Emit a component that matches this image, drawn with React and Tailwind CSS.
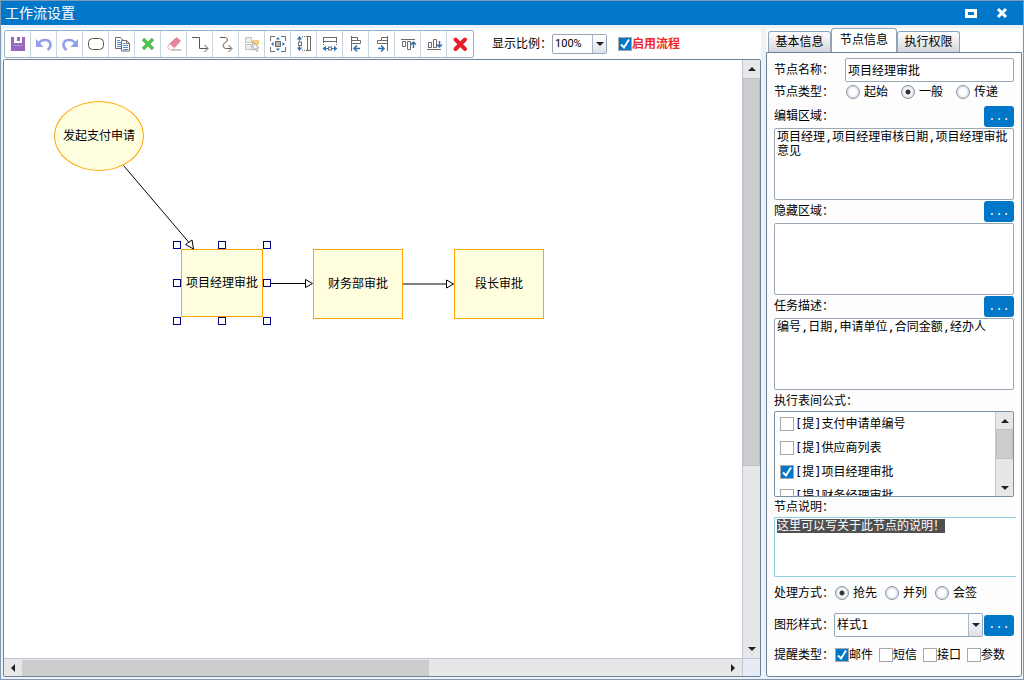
// src/pages/WorkflowSettings.jsx
import React from 'react';
import { useEffect, useRef, useState } from 'react';
import clsx from 'clsx';

const GREY = "#6b6b6b";
const BLUE = "#2f6fb5";

const Icon = ({ children }) => (
    <svg viewBox="0 0 20 20" className="w-5 h-5" fill="none">{children}</svg>
);

const tools = [
    {
        title: "保存",
        icon: (
            <Icon>
                <path d="M3 3h3v6h8V3h3v14H3z" fill="#9768bd" />
                <path d="M9 3h3v4H9z" fill="#9768bd" />
                <path d="M5 11h10v1H5z" fill="#b08bd0" />
            </Icon>
        ),
    },
    {
        title: "撤销",
        icon: (
            <Icon>
                <path d="M4.500 10C7 4.500 16.500 4.500 16.500 11c0 2-1 3.500-3 5" stroke="#93a0ea" strokeWidth="2.600" />
                <path d="M2 5v8h7.500z" fill="#93a0ea" />
            </Icon>
        ),
    },
    {
        title: "重做",
        icon: (
            <Icon>
                <path d="M15.500 10C13 4.500 3.500 4.500 3.500 11c0 2 1 3.500 3 5" stroke="#93a0ea" strokeWidth="2.600" />
                <path d="M18 5v8h-7.500z" fill="#93a0ea" />
            </Icon>
        ),
    },
    {
        title: "节点",
        icon: (
            <Icon>
                <rect x="2.500" y="4.500" width="15" height="11" rx="4" stroke="#555" />
            </Icon>
        ),
    },
    {
        title: "复制",
        icon: (
            <Icon>
                <path d="M3.500 3.500h5l2.500 2.500v8.500H3.500z" fill="#fff" stroke={GREY} />
                <path d="M5 6.500h3M5 8.500h4M5 10.500h4M5 12.500h4" stroke={BLUE} strokeWidth="0.800" />
                <path d="M9.500 6.500h5l3 3v7.500h-8z" fill="#fff" stroke={GREY} />
                <path d="M14.500 6.500v3h3" stroke={GREY} />
                <path d="M11 9.500h2.500M11 11.500h5M11 13.500h5M11 15.500h5" stroke={BLUE} strokeWidth="0.800" />
            </Icon>
        ),
    },
    {
        title: "删除",
        icon: (
            <Icon>
                <path d="M5 5l10 10M15 5L5 15" stroke="#4fbf4f" strokeWidth="3.400" />
            </Icon>
        ),
    },
    {
        title: "擦除",
        icon: (
            <Icon>
                <path d="M12.500 3l4.500 4-6.500 7-5-4.500z" fill="#e5849a" />
                <path d="M5.500 9.500l5 4.500-1.800 1.800H6l-2.300-2.300z" fill="#fff" stroke="#e5a0ae" />
                <path d="M8 16h9.500" stroke="#999" />
            </Icon>
        ),
    },
    {
        title: "折线",
        icon: (
            <Icon>
                <path d="M2 3.500h7.500v11h8M14.500 11l3.500 3.500-3.500 3.500" stroke="#555" />
            </Icon>
        ),
    },
    {
        title: "曲线",
        icon: (
            <Icon>
                <path d="M4 3.500h4c2.500 0 3.500 1 3.500 2.500 0 2-4.500 3-4.500 5.500 0 2 1.500 3 3.500 3H15M12.500 11l3.500 3.500-3.500 3.500" stroke="#555" />
            </Icon>
        ),
    },
    {
        title: "选择",
        icon: (
            <Icon>
                <path d="M3.500 3.500h6v5h-6zM3.500 10.500h6v5h-6z" fill="#eee" stroke="#c2c2c2" />
                <path d="M10 6h7v5h-7z" fill="#f3cd80" />
                <path d="M11 8v8.500l2-2 1.500 3 1.500-.8-1.500-2.700H17z" fill="#f7f7f7" stroke="#aaa" />
            </Icon>
        ),
    },
    {
        title: "居中",
        icon: (
            <Icon>
                <path d="M7 2.500H2.500V7M13 2.500h4.500V7M7 17.500H2.500V13M13 17.500h4.500V13" stroke={GREY} />
                <rect x="7.500" y="7.500" width="5" height="5" fill="#b5b5b5" stroke={GREY} />
                <path d="M10 3l2 2.500H8zM10 17l2-2.500H8zM3 10l2.500-2v4zM17 10l-2.500-2v4z" fill={BLUE} />
            </Icon>
        ),
    },
    {
        title: "等高",
        icon: (
            <Icon>
                <path d="M5.500 2l2.700 3.500H2.800zM5.500 17l2.700-3.500H2.800z" fill={BLUE} />
                <path d="M5.500 4v3M5.500 12v3" stroke={BLUE} />
                <rect x="4.500" y="8" width="3" height="3.500" stroke={GREY} />
                <path d="M8 2.500h5M8 16.500h5" stroke={GREY} strokeDasharray="1 1" />
                <rect x="13.500" y="2.500" width="3" height="14" stroke={GREY} />
            </Icon>
        ),
    },
    {
        title: "等宽",
        icon: (
            <Icon>
                <rect x="3.500" y="3.500" width="13" height="4" stroke={GREY} />
                <path d="M3.500 8v4M16.500 8v4" stroke={GREY} strokeDasharray="1 1" />
                <path d="M2.500 14.500l3.500-2.700v5.400zM17.500 14.500l-3.500-2.700v5.400z" fill={BLUE} />
                <path d="M5 14.500h3M12 14.500h3" stroke={BLUE} />
                <rect x="8.500" y="13" width="3" height="3" stroke={GREY} />
            </Icon>
        ),
    },
    {
        title: "左对齐",
        icon: (
            <Icon>
                <path d="M5.500 2v15" stroke={GREY} />
                <path d="M5.500 3.500h6v3h-6M5.500 9.500h9v-3h-3" stroke={GREY} />
                <path d="M14 14.500H8M11 11.500l-3 3 3 3" stroke={BLUE} strokeWidth="1.500" />
            </Icon>
        ),
    },
    {
        title: "右对齐",
        icon: (
            <Icon>
                <path d="M15.500 2v15" stroke={GREY} />
                <path d="M15.500 3.500h-6v3h6M9.500 6.500h-4v3h10" stroke={GREY} />
                <path d="M6 14.500h6M9 11.500l3 3-3 3" stroke={BLUE} strokeWidth="1.500" />
            </Icon>
        ),
    },
    {
        title: "顶对齐",
        icon: (
            <Icon>
                <path d="M3 5.500h14" stroke={GREY} />
                <path d="M4.500 7.500h3v5h-3zM9.500 7.500h3v8h-3z" stroke={GREY} />
                <path d="M15.500 14V8M13 10.500L15.500 8l2.500 2.500" stroke={BLUE} strokeWidth="1.500" />
            </Icon>
        ),
    },
    {
        title: "底对齐",
        icon: (
            <Icon>
                <path d="M3 15.500h14" stroke={GREY} />
                <path d="M4.500 8.500h3v5h-3zM9.500 5.500h3v8h-3z" stroke={GREY} />
                <path d="M15.500 7v6M13 10.500l2.500 2.500 2.500-2.500" stroke={BLUE} strokeWidth="1.500" />
            </Icon>
        ),
    },
    {
        title: "清空",
        icon: (
            <Icon>
                <path d="M5.500 5.500l9.500 9.500M15 5.500L5.500 15" stroke="#e8202a" strokeWidth="4" strokeLinecap="round" />
            </Icon>
        ),
    },
];

const nodes = [
    { name: "发起支付申请", place: "left-[50px] top-[41px] w-[90px] h-[70px] rounded-[50%]" },
    { name: "项目经理审批", place: "left-[177px] top-[189px] w-[82px] h-[68px]" },
    { name: "财务部审批", place: "left-[309px] top-[189px] w-[90px] h-[70px]" },
    { name: "段长审批", place: "left-[450px] top-[189px] w-[90px] h-[70px]" },
];

const handles = [
    "left-[169px] top-[181px]",
    "left-[214px] top-[181px]",
    "left-[259px] top-[181px]",
    "left-[169px] top-[219px]",
    "left-[259px] top-[219px]",
    "left-[169px] top-[257px]",
    "left-[214px] top-[257px]",
    "left-[259px] top-[257px]",
];

const formulas = [
    { name: "[提]支付申请单编号", checked: false },
    { name: "[提]供应商列表", checked: false },
    { name: "[提]项目经理审批", checked: true },
    { name: "[提]财务经理审批", checked: false },
];

const Checkbox = ({ label, defaultChecked, className }) => (
    <label className={clsx("flex items-center whitespace-nowrap", className)}>
        <span className="grid shrink-0">
            <input
                type="checkbox"
                defaultChecked={defaultChecked}
                className="peer appearance-none col-start-1 row-start-1 w-3.5 h-3.5 border border-[#a9a9a9] bg-white checked:bg-[#0077c8]"
            />
            <svg viewBox="0 0 14 14" className="col-start-1 row-start-1 w-3.5 h-3.5 invisible peer-checked:visible pointer-events-none">
                <path d="M3 7.500l3 3 5-8" fill="none" stroke="#fff" strokeWidth="2" />
            </svg>
        </span>
        {label}
    </label>
);

const Radio = ({ name, label, defaultChecked }) => (
    <label className="flex items-center gap-1 whitespace-nowrap">
        <input
            type="radio"
            name={name}
            defaultChecked={defaultChecked}
            className="appearance-none w-3.5 h-3.5 rounded-full border border-[#8795a5] bg-[radial-gradient(circle,#ffffff_3px,#d9dde3_6px)] checked:bg-[radial-gradient(circle,#333333_2px,#ffffff_3px,#d9dde3_6px)]"
        />
        {label}
    </label>
);

const MoreButton = ({ title }) => (
    <button type="button" title={title} className="w-[30px] h-[21px] shrink-0 rounded-[3px] bg-[#0077c8] text-white font-['Liberation_Mono',monospace] text-xs">
        ...
    </button>
);

const Arrow = ({ dir }) => {
    const shapes = {
        up: "M1 7l4-4 4 4z",
        down: "M1 3l4 4 4-4z",
        left: "M7 1L3 5l4 4z",
        right: "M3 1l4 4-4 4z",
    };
    return (
        <svg viewBox="0 0 10 10" className="w-2.5 h-2.5 shrink-0">
            <path d={shapes[dir]} fill="#222" />
        </svg>
    );
};

const Select = ({ id, options, className }) => (
    <div className={clsx("grid rounded-[2px] border border-[#97a6b5] bg-white", className)}>
        <select id={id} className="appearance-none col-start-1 row-start-1 w-full pl-0.5 pr-4 bg-transparent outline-none">
            {options.map((o) => (
                <option key={o}>{o}</option>
            ))}
        </select>
        <span className="col-start-1 row-start-1 justify-self-end w-3.5 flex items-center justify-center border-l border-[#a9b6c4] bg-linear-to-b from-white to-[#dde2e8] pointer-events-none">
            <Arrow dir="down" />
        </span>
    </div>
);

const TextSection = ({ id, label, value }) => (
    <div className="mb-px">
        <div className="h-[22px] flex items-start justify-between">
            <label htmlFor={id} className="leading-5">{label}</label>
            <MoreButton title={label} />
        </div>
        <textarea
            id={id}
            defaultValue={value}
            className="block w-full h-[72px] px-0.5 py-px resize-none rounded-[2px] border border-[#9aa8b6] bg-white leading-[14px] outline-none"
        />
    </div>
);

const Canvas = () => (
    <div className="relative flex-1 bg-white overflow-hidden">
        {nodes.map((n) => (
            <div key={n.name} className={clsx("absolute flex items-center justify-center border border-[#ffa500] bg-[#ffffe0] whitespace-nowrap", n.place)}>
                {n.name}
            </div>
        ))}
        <svg className="absolute left-0 top-0 w-[560px] h-[280px] pointer-events-none" stroke="#000" fill="#fff">
            <path d="M119.500 105.500L185 182.500" />
            <path d="M181.500 184.500l6.500-4.500 1.500 9z" />
            <path d="M267 223.500h34" />
            <path d="M301.500 219.500v8l7-4z" />
            <path d="M399 224h43" />
            <path d="M442.500 220v8l7-4z" />
        </svg>
        {handles.map((h) => (
            <span key={h} className={clsx("absolute w-2 h-2 border border-[#000080] bg-white", h)} />
        ))}
    </div>
);

const WorkflowSettings = () => {
    const [tab, setTab] = useState("节点信息");
    const noteRef = useRef(null);

    // The note starts out selected so typing replaces the placeholder sentence
    useEffect(() => {
        noteRef.current.focus();
        noteRef.current.select();
    }, []);

    return (
        <div className="min-h-screen flex flex-col border border-[#7f99b3] bg-[#eef1f7] text-xs text-black font-['DejaVu_Sans_Mono','Noto_Sans_CJK_SC',monospace]">
            <header className="h-6 flex items-center justify-between pl-1 pr-[15px] bg-[#0077c8] text-white">
                <h1 className="text-sm leading-5">工作流设置</h1>
                <div className="flex items-center gap-[19px]">
                    <button type="button" title="最大化">
                        <svg viewBox="0 0 12 12" className="w-3 h-3">
                            <path d="M1.500 3.500h9v6h-9z" fill="none" stroke="#fff" strokeWidth="3" />
                        </svg>
                    </button>
                    <button type="button" title="关闭">
                        <svg viewBox="0 0 12 12" className="w-3 h-3">
                            <path d="M2 2l8 8M10 2l-8 8" stroke="#fff" strokeWidth="3" />
                        </svg>
                    </button>
                </div>
            </header>

            <div className="flex-1 flex gap-[5px] pt-[3px] pl-0.5 pr-px pb-0.5">
                <main className="flex-1 flex flex-col">
                    <div className="flex items-center pt-0.5 pb-px pl-px bg-white">
                        <div className="flex h-7 rounded-[2px] border border-[#9db0c6] bg-white">
                            {tools.map((t, i) => (
                                <button
                                    key={t.title}
                                    type="button"
                                    title={t.title}
                                    className={clsx("w-[26px] flex items-center justify-center", i < tools.length - 1 && "border-r border-[#c9d6e2]")}
                                >
                                    {t.icon}
                                </button>
                            ))}
                        </div>
                        <label htmlFor="zoom" className="pl-[18px]">显示比例：</label>
                        <Select id="zoom" options={["100%", "75%", "50%"]} className="w-[55px] h-5 font-['Roboto',sans-serif] text-[11px]" />
                        <Checkbox label="启用流程" defaultChecked className="ml-[11px] font-bold text-[#f02828]" />
                    </div>

                    <div className="flex-1 flex flex-col rounded-[2px] border border-[#6c8399] bg-[#e6ebf5]">
                        <div className="flex-1 flex">
                            <Canvas />
                            <div className="w-[18px] flex flex-col border-l border-[#bcc6d4] bg-[#e7e7e7]">
                                <span className="h-[18px] flex items-center justify-center"><Arrow dir="up" /></span>
                                <div className="flex-1 flex flex-col">
                                    <div className="basis-[69%] border border-[#c0c0c0] bg-[#cdcdcd]" />
                                </div>
                                <span className="h-[18px] flex items-center justify-center"><Arrow dir="down" /></span>
                            </div>
                        </div>
                        <div className="h-[18px] flex border-t border-[#bcc6d4]">
                            <div className="flex-1 flex items-center bg-[#e7e7e7]">
                                <span className="w-[18px] flex justify-center"><Arrow dir="left" /></span>
                                <div className="flex-1 h-4">
                                    <div className="w-[58%] h-full bg-[#cdcdcd]" />
                                </div>
                                <span className="w-[18px] flex justify-center"><Arrow dir="right" /></span>
                            </div>
                            <div className="w-[18px] border-l border-[#bcc6d4]" />
                        </div>
                    </div>
                </main>

                <aside className="w-[256px] flex flex-col">
                    <div role="tablist" className="h-6 flex items-end px-0.5 bg-white">
                        {["基本信息", "节点信息", "执行权限"].map((t) => (
                            <button
                                key={t}
                                type="button"
                                role="tab"
                                aria-selected={tab === t}
                                onClick={() => setTab(t)}
                                className={clsx(
                                    "border border-b-0 border-[#8fa1b5] rounded-t-[3px]",
                                    tab === t ? "w-[66px] h-6 pb-0.5 bg-white" : "w-[63px] h-[21px] bg-linear-to-b from-white to-[#d3d6dc]"
                                )}
                            >
                                {t}
                            </button>
                        ))}
                    </div>

                    <form className="flex-1 px-[7px] pt-[5px] rounded-b-[3px] border border-[#6c8399] bg-[#fdfdfd]">
                        <div className="flex items-center">
                            <label htmlFor="nodeName" className="w-[71px]">节点名称：</label>
                            <input
                                id="nodeName"
                                defaultValue="项目经理审批"
                                className="flex-1 min-w-0 h-6 px-0.5 pb-0.5 rounded-[2px] border border-[#9aa8b6] bg-white outline-none"
                            />
                        </div>
                        <fieldset className="h-5 mb-1 flex items-center">
                            <span className="w-[72px]">节点类型：</span>
                            <div className="flex gap-[13px]">
                                <Radio name="nodeType" label="起始" />
                                <Radio name="nodeType" label="一般" defaultChecked />
                                <Radio name="nodeType" label="传递" />
                            </div>
                        </fieldset>

                        <TextSection id="editArea" label="编辑区域：" value="项目经理,项目经理审核日期,项目经理审批意见" />
                        <TextSection id="hiddenArea" label="隐藏区域：" value="" />
                        <TextSection id="taskDesc" label="任务描述：" value="编号,日期,申请单位,合同金额,经办人" />

                        <p className="leading-5">执行表间公式：</p>
                        <div className="h-[86px] flex rounded-[2px] border border-[#7d8fa1] bg-white overflow-hidden">
                            <ul className="flex-1 pl-[5px] overflow-hidden">
                                {formulas.map((f) => (
                                    <li key={f.name} className="h-6 flex items-center">
                                        <Checkbox label={f.name} defaultChecked={f.checked} className="gap-px" />
                                    </li>
                                ))}
                            </ul>
                            <div className="w-[18px] flex flex-col border-l border-[#bcc6d4] bg-[#e7e7e7]">
                                <span className="h-[17px] flex items-center justify-center"><Arrow dir="up" /></span>
                                <div className="flex-1 flex flex-col">
                                    <div className="basis-[60%] border border-[#c0c0c0] bg-[#cdcdcd]" />
                                </div>
                                <span className="h-[17px] flex items-center justify-center"><Arrow dir="down" /></span>
                            </div>
                        </div>

                        <label htmlFor="note" className="block leading-5">节点说明：</label>
                        <div className="-mr-0.5">
                            <textarea
                                id="note"
                                ref={noteRef}
                                defaultValue="这里可以写关于此节点的说明！"
                                className="block w-full h-[60px] px-0.5 py-px resize-none rounded-l-[2px] border border-r-0 border-[#8fcfdf] bg-white leading-[14px] outline-none selection:bg-[#505050] selection:text-white"
                            />
                        </div>

                        <fieldset className="h-8 mb-1 flex items-center">
                            <span className="w-[61px]">处理方式：</span>
                            <div className="flex gap-2">
                                <Radio name="mode" label="抢先" defaultChecked />
                                <Radio name="mode" label="并列" />
                                <Radio name="mode" label="会签" />
                            </div>
                        </fieldset>

                        <div className="flex items-center">
                            <label htmlFor="shape" className="w-[60px]">图形样式：</label>
                            <Select id="shape" options={["样式1", "样式2"]} className="flex-1 h-6 mr-px" />
                            <MoreButton title="图形样式" />
                        </div>

                        <fieldset className="h-9 flex items-center">
                            <span className="w-[61px]">提醒类型：</span>
                            <div className="flex gap-1.5">
                                <Checkbox label="邮件" defaultChecked />
                                <Checkbox label="短信" />
                                <Checkbox label="接口" />
                                <Checkbox label="参数" />
                            </div>
                        </fieldset>
                    </form>
                </aside>
            </div>
        </div>
    );
};

export default WorkflowSettings;
